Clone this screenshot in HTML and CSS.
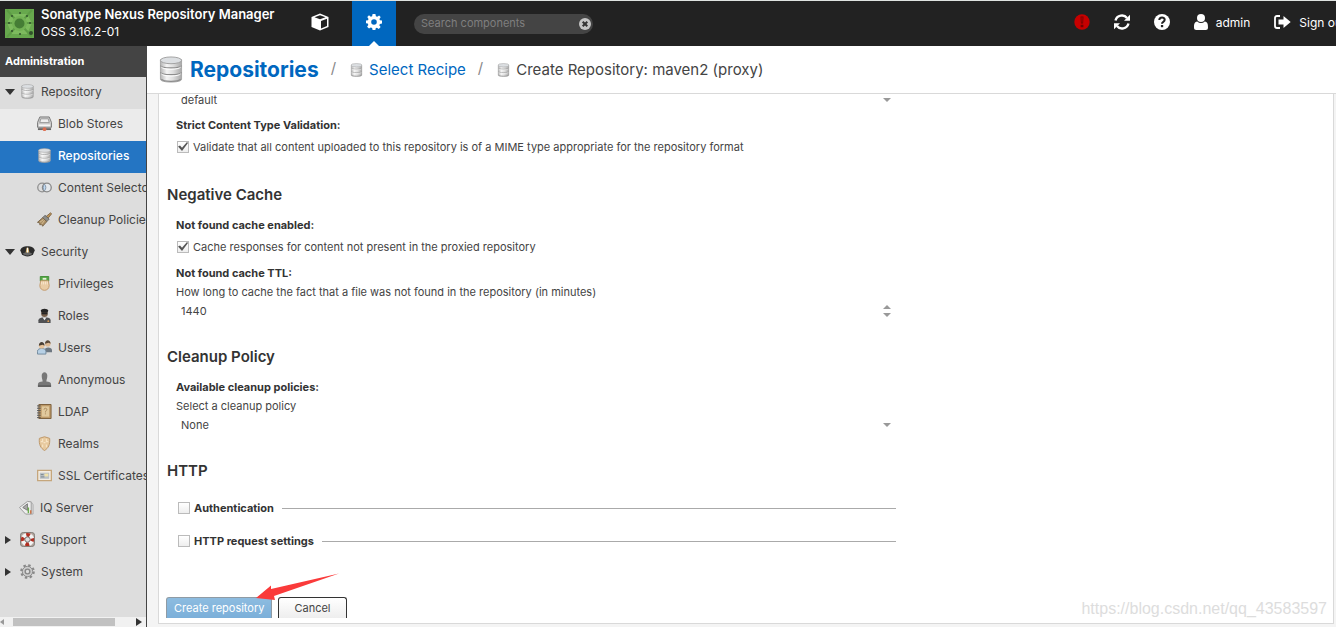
FILE: index.html
```
<!DOCTYPE html>
<html lang="en">
<head>
<meta charset="utf-8">
<title>Sonatype Nexus Repository Manager</title>
<link rel="stylesheet" href="styles.css">
</head>
<body>
<svg class="sprite" aria-hidden="true">
  <defs>
    <linearGradient id="metal" x1="0" x2="1" y1="0" y2="0">
      <stop offset="0" stop-color="#b4b4b4"/><stop offset=".3" stop-color="#f4f4f4"/><stop offset=".6" stop-color="#dedede"/><stop offset="1" stop-color="#a8a8a8"/>
    </linearGradient>
    <symbol id="db" viewBox="0 0 24 28">
      <path d="M1 4v20c0 2 5 3 11 3s11-1 11-3V4z" fill="url(#metal)" stroke="#a5a5a5"/>
      <ellipse cx="12" cy="4.500" rx="11" ry="3.500" fill="#dcdfe2" stroke="#a0a0a0"/>
      <path d="M1 10c1 3 21 3 22 0M1 17c1 3 21 3 22 0M2 24c2 3 18 3 20 0" fill="none" stroke="#8d8d8d" stroke-width="1.200"/>
      <path d="M2 11.500c2 3 18 3 20 0M2 18.500c2 3 18 3 20 0" fill="none" stroke="#fff"/>
    </symbol>
  </defs>
</svg>

<header class="topbar">
  <svg class="logo" viewBox="0 0 29 29" aria-hidden="true">
    <rect width="29" height="29" fill="#67a84d"/>
    <path d="M7 5h15l5 9-5 11H7L2 14z" fill="#7dbb5e"/>
    <path d="M2 1l8 9M27 1l-8 9M2 28l8-9M27 28l-8-9M0 14h8M29 14h-8" stroke="#5d9c45" stroke-width="2"/>
    <circle cx="14.500" cy="14.500" r="7.500" fill="#72b154"/>
    <circle cx="14.500" cy="14.500" r="5" fill="#457d35"/>
    <g fill="#31522b"><circle cx="7" cy="7" r="1"/><circle cx="15" cy="4" r="1"/><circle cx="22" cy="7" r="1"/><circle cx="4" cy="14" r="1"/><circle cx="25" cy="14" r="1"/><circle cx="7" cy="22" r="1"/><circle cx="15" cy="25" r="1"/><circle cx="26" cy="24" r="2"/></g>
  </svg>
  <div class="brand"><strong>Sonatype Nexus Repository Manager</strong><span>OSS 3.16.2-01</span></div>
  <nav class="modes" aria-label="Modes">
    <button class="mode" type="button" aria-label="Browse">
      <svg width="18" height="18" viewBox="0 0 18 18"><path d="M9 .5L17.500 4v10L9 17.500.5 14V4z" fill="#fff"/><path d="M3.500 4.200L9 2.200l5.500 2L9 6.300zM10 8l6-2.300v7.300l-6 2.600z" fill="#222"/></svg>
    </button>
    <button class="mode mode-active" type="button" aria-label="Administration">
      <svg width="16" height="16" viewBox="0 0 16 16"><path fill="#fff" fill-rule="evenodd" d="M6.600 0h2.800l.5 2.200 1.300.5L13.100 1.500l1.500 1.500 0 .3-1.200 1.600.5 1.300 2.100.4v2.800l-2.100.5-.6 1.300 1.300 1.800-1.800 1.900-1.900-1.200-1.200.5L9.400 16H6.600l-.5-2.100-1.300-.5-1.800 1.200-1.900-1.900 1.200-1.800-.5-1.300L0 9.300V6.600l2-.4.5-1.300-1.200-1.900L3 1.300l1.800 1.400 1.300-.5zM8 5.200a2.800 2.800 0 100 5.600 2.800 2.800 0 000-5.600z"/></svg>
    </button>
  </nav>
  <div class="search">
    <input type="text" placeholder="Search components" aria-label="Search components">
    <button type="button" aria-label="Clear search"><svg width="12" height="12" viewBox="0 0 12 12"><circle cx="6" cy="6" r="6" fill="#c4c4c4"/><path d="M3.700 3.700l4.600 4.600M8.300 3.700L3.700 8.300" stroke="#333" stroke-width="2"/></svg></button>
  </div>
  <div class="tools">
    <button type="button" aria-label="System status"><svg width="16" height="16" viewBox="0 0 16 16"><circle cx="8" cy="8" r="7.700" fill="#c70000"/><path d="M6.500 2.500h3l-.4 7H6.900zM6.600 10.700h2.800v2.600H6.600z" fill="#740000"/><path d="M7.500 3.300h1l-.2 5.500h-.6z" fill="#c70000"/></svg></button>
    <button type="button" aria-label="Refresh"><svg width="16" height="16" viewBox="0 0 16 16"><path d="M1.500 6.500C3 1 10 0 13 4M14.500 9.500C13 15 6 16 3 12" fill="none" stroke="#fff" stroke-width="2.400"/><path d="M16 .8v6h-6zM0 15.200v-6h6z" fill="#fff"/></svg></button>
    <button type="button" aria-label="Help"><svg width="16" height="16" viewBox="0 0 16 16"><circle cx="8" cy="8" r="8" fill="#fff"/><path d="M5.300 6c.1-3.300 5.400-3.200 5.400-.2C10.700 8 8 7.700 8 9.800" fill="none" stroke="#222" stroke-width="2"/><path d="M6.900 11h2.300v2.200H6.900z" fill="#222"/></svg></button>
    <button class="user" type="button"><svg width="14" height="16" viewBox="0 0 14 16"><circle cx="7" cy="4" r="4" fill="#fff"/><path d="M3.300 7.400C0 7.700 0 11 0 13.500 0 15.300 1 16 2.200 16h9.600c1.400 0 2.200-.8 2.200-2.500 0-2.500 0-5.800-3.300-6.100a5 5 0 01-7.400 0z" fill="#fff"/></svg>admin</button>
    <button class="signout" type="button"><svg width="17" height="14" viewBox="0 0 17 14"><path d="M6 1H3C1.500 1 1 1.800 1 3v8c0 1.300.6 2 2 2h3" fill="none" stroke="#fff" stroke-width="1.800"/><path d="M4.500 4.500h5V1L16.700 7l-7.200 6V9.500h-5z" fill="#fff"/></svg>Sign out</button>
  </div>
</header>

<div class="app">
  <aside class="sidebar">
    <h2 class="sidebar-title">Administration</h2>
    <nav class="tree" aria-label="Administration">
      <a class="item" href="#"><i class="open"></i><svg viewBox="0 0 24 28"><use href="#db"/></svg>Repository</a>
      <a class="item sub hover" href="#"><svg viewBox="0 0 16 16"><path d="M3 1h10l2.500 6v5H.5V7z" fill="#c9c9c9" stroke="#777"/><path d="M4 3h8l1 4H3z" fill="#eee" stroke="#999"/><path d="M2 9h12v2H2z" fill="#f6f6f6"/><path d="M1 13h14v2H1z" fill="#666"/><circle cx="8" cy="14" r="2" fill="#df6e50"/></svg>Blob Stores</a>
      <a class="item sub selected" href="#"><svg viewBox="0 0 24 28"><use href="#db"/></svg>Repositories</a>
      <a class="item sub" href="#"><svg viewBox="0 0 16 16"><circle cx="5.500" cy="8" r="4.700" fill="#ddd" stroke="#909090" stroke-width="1.400"/><circle cx="10.500" cy="8" r="4.700" fill="#e4e8ec" stroke="#888" stroke-width="1.400"/><path d="M8 4.500a5 5 0 010 7 5 5 0 010-7z" fill="#bdd9f3" stroke="#8292a3"/></svg>Content Selectors</a>
      <a class="item sub" href="#"><svg viewBox="0 0 16 16"><path d="M14.500.8l1 1.200-4 5-2-2z" fill="#bd9558" stroke="#83694a"/><path d="M8.500 3.500l4.500 4-2.500 2.700-4.500-4z" fill="#8c8c88" stroke="#666"/><path d="M6 6.200l4.500 4-4.500 5-1-2-2 .5v-2L.5 11z" fill="#aa8e64" stroke="#776348"/><path d="M3 11l4-3M5 13l3-4" stroke="#d8c19a"/></svg>Cleanup Policies</a>
      <a class="item" href="#"><i class="open"></i><svg viewBox="0 0 16 16"><path d="M.3 7C1 3.600 4 2.500 8 2.500S15 3.600 15.700 7L14 11c-3 3-9 3-12 0z" fill="#2c2c2c"/><path d="M3 10c3-1.500 7-1.500 10 0-2 3-8 3-10 0z" fill="#676767"/><path d="M6 9l1-5h2l1 5z" fill="#d9b878"/><path d="M8 4v5" stroke="#fff"/></svg>Security</a>
      <a class="item sub" href="#"><svg viewBox="0 0 16 16"><path d="M3.500.5h9v5h-9z" fill="#51a742" stroke="#418d36"/><path d="M6 2h4v2H6z" fill="#e9efda"/><path d="M4 5h8l1 5c0 7-10 7-10 0z" fill="#e9cca5" stroke="#c29a6d"/><path d="M5 6v3M7 6v3M9 6v3M11 6v3" stroke="#f8e5cd"/></svg>Privileges</a>
      <a class="item sub" href="#"><svg viewBox="0 0 16 16"><path d="M1.500 16v-3c0-2 3-3 4-3h5c2 0 4 1 4 3v3z" fill="#505153"/><path d="M6 10l2 3 2-3" fill="#eee"/><circle cx="8" cy="6" r="3.500" fill="#77604c"/><path d="M4 3c0-3 8-3 8 0l-1 2H5z" fill="#252525"/><path d="M5 6h6" stroke="#252525" stroke-width="1.500"/><circle cx="12" cy="14" r="1" fill="#db9b50"/></svg>Roles</a>
      <a class="item sub" href="#"><svg viewBox="0 0 16 16"><path d="M8 11c0-4 8-4 8 0v2H8z" fill="#6d7781"/><circle cx="11.500" cy="4" r="3" fill="#ddb994"/><path d="M8.500 4c0-5 6-5 6 0l-2-1z" fill="#5b4a3a"/><path d="M.5 15v-3c0-4 9-4 9 0v3z" fill="#b7d0e5" stroke="#71899d"/><circle cx="5" cy="6" r="3" fill="#e8c39a"/><path d="M2 6c0-5 6-5 6 0L6 5z" fill="#4a3f35"/></svg>Users</a>
      <a class="item sub" href="#"><svg viewBox="0 0 16 16"><path d="M5 4c0-5 6-5 6 0 0 3-1 4-1 6 3 0 5 1 5 3v3H1v-3c0-2 2-3 5-3 0-2-1-3-1-6z" fill="#777"/><path d="M1 14h14v2H1z" fill="#616161"/></svg>Anonymous</a>
      <a class="item sub" href="#"><svg viewBox="0 0 16 16"><path d="M2 .5h13v15H2z" fill="#bd9a69" stroke="#795b37"/><path d="M5 2.500h8v11H5z" fill="#e1c99d"/><path d="M0 2h4M0 4.500h4M0 7h4M0 9.500h4M0 12h4M0 14.500h4" stroke="#555"/><path d="M7.500 6c0-2 3-2 3 0 0 1-1.500 1-1.500 3M9 10v1" fill="none" stroke="#a58459"/></svg>LDAP</a>
      <a class="item sub" href="#"><svg viewBox="0 0 16 16"><path d="M2.500 2.500L8 .8l5.500 1.700c.6 7-1.500 10.500-5.500 13-4-2.500-6.100-6-5.500-13z" fill="#e7c99e" stroke="#bc9566"/><path d="M6 3v3H4M10 3v3h2M6 9v3M10 9v3M7 7h2" fill="none" stroke="#f7e4c5" stroke-width="1.200"/></svg>Realms</a>
      <a class="item sub" href="#"><svg viewBox="0 0 16 16"><path d="M.7 2.500h14.600v11H.7z" fill="#f3ede2" stroke="#c5a67c" stroke-width="1.400"/><path d="M3 5h10v6.500H3z" fill="#b9c0c4"/><path d="M4 9.500h4M4 7h3" stroke="#7c868c"/><path d="M8 6h4v3H8z" fill="#f1e3a8"/></svg>SSL Certificates</a>
      <a class="item leaf" href="#"><svg viewBox="0 0 16 16"><path d="M.5 8L9 1.500l4 .5v13H7z" fill="#eee" stroke="#999"/><path d="M4 8l5-4v7z" fill="#aaa" stroke="#777"/><path d="M10 14V8" stroke="#6bad4a" stroke-width="1.500"/><path d="M12.500 15v-4" stroke="#cf7346" stroke-width="1.500"/><path d="M13 2l2 3v10h-3" fill="none" stroke="#aaa"/></svg>IQ Server</a>
      <a class="item" href="#"><i class="shut"></i><svg viewBox="0 0 16 16"><rect x=".5" y=".5" width="15" height="15" rx="3" fill="#b5aaa2" stroke="#7d7772"/><circle cx="8" cy="8" r="5" fill="none" stroke="#f4f4f4" stroke-width="4"/><circle cx="8" cy="8" r="5" fill="none" stroke="#b02f22" stroke-width="4" stroke-dasharray="3.930 3.930" stroke-dashoffset="1.960"/><circle cx="8" cy="8" r="2.800" fill="#ddd" stroke="#777"/></svg>Support</a>
      <a class="item" href="#"><i class="shut"></i><svg viewBox="0 0 16 16"><circle cx="8" cy="8" r="6.600" fill="none" stroke="#888" stroke-width="2.400" stroke-dasharray="2.600 2.580"/><circle cx="8" cy="8" r="5.500" fill="#ccc" stroke="#888"/><circle cx="8" cy="8" r="2.500" fill="#ddd" stroke="#888" stroke-width="1.500"/></svg>System</a>
    </nav>
    <div class="hscroll"><i class="pale"></i><span></span><i class="shut"></i></div>
  </aside>

  <main class="main">
    <nav class="crumbs" aria-label="Breadcrumb">
      <svg class="crumb-lg" viewBox="0 0 24 28"><use href="#db"/></svg>
      <a class="crumb-home" href="#">Repositories</a>
      <span class="slash">/</span>
      <svg class="crumb-sm" viewBox="0 0 24 28"><use href="#db"/></svg>
      <a href="#">Select Recipe</a>
      <span class="slash">/</span>
      <svg class="crumb-sm" viewBox="0 0 24 28"><use href="#db"/></svg>
      <span>Create Repository: maven2 (proxy)</span>
    </nav>
    <div class="scroller">
      <form class="panel">
        <div class="control first"><select aria-label="Blob store"><option>default</option></select><span class="carets"><i class="down"></i></span></div>
        <div class="field">
          <div class="label">Strict Content Type Validation:</div>
          <label class="check"><input type="checkbox" checked>Validate that all content uploaded to this repository is of a MIME type appropriate for the repository format</label>
        </div>

        <h2>Negative Cache</h2>
        <div class="field">
          <div class="label">Not found cache enabled:</div>
          <label class="check"><input type="checkbox" checked>Cache responses for content not present in the proxied repository</label>
        </div>
        <div class="field next">
          <label class="label" for="ttl">Not found cache TTL:</label>
          <div class="hint">How long to cache the fact that a file was not found in the repository (in minutes)</div>
          <div class="control"><input id="ttl" type="number" value="1440"><span class="carets"><i class="up"></i><i class="down"></i></span></div>
        </div>

        <h2>Cleanup Policy</h2>
        <div class="field">
          <label class="label" for="policy">Available cleanup policies:</label>
          <div class="hint">Select a cleanup policy</div>
          <div class="control"><select id="policy"><option>None</option></select><span class="carets"><i class="down"></i></span></div>
        </div>

        <h2>HTTP</h2>
        <div class="groups">
          <label class="group"><input type="checkbox">Authentication</label>
          <label class="group"><input type="checkbox">HTTP request settings</label>
        </div>

        <div class="actions">
          <button class="btn primary" type="button">Create repository</button>
          <button class="btn" type="button">Cancel</button>
          <svg class="arrow" width="84" height="28" viewBox="0 0 84 28" aria-hidden="true"><path d="M83 .5L15 16V12.500L0 25l19 2-1-4z" fill="#fa3a3a"/></svg>
        </div>
        <div class="watermark">https://blog.csdn.net/qq_43583597</div>
      </form>
    </div>
  </main>
</div>
</body>
</html>
```
FILE: styles.css
```
* { box-sizing: border-box; }
body {
  margin: 0;
  min-height: 100vh;
  display: flex;
  flex-direction: column;
  font: 11px/19px Inter, "Liberation Sans", sans-serif;
  color: #444;
  background: #f4f4f4;
  overflow: hidden;
}
button, input, select { font: inherit; color: inherit; }
button { border: 0; background: none; padding: 0; }
a { color: #0067bf; text-decoration: none; }
svg { flex: none; }
.sprite { position: absolute; width: 0; height: 0; }

.topbar {
  display: flex;
  align-items: center;
  height: 46px;
  padding-left: 5px;
  background: #222;
  border-top: 1px solid #dfe3e1;
  color: #fff;
  overflow: hidden;
  white-space: nowrap;
}
.logo { width: 29px; height: 29px; }
.brand { display: flex; flex-direction: column; width: 257px; margin-left: 7px; padding-bottom: 1px; line-height: 18px; font-size: 12px; }
.brand strong { font-size: 13px; font-weight: 600; }
.modes { display: flex; align-self: stretch; }
.mode { display: grid; place-items: center; width: 44px; margin-right: 10px; padding-bottom: 3px; position: relative; }
.mode-active { background: #0067bf; margin-right: 0; }
.mode-active::after {
  content: "";
  position: absolute;
  bottom: 0;
  left: 17px;
  border: 5px solid transparent;
  border-top: 0;
  border-bottom-color: #fff;
}
.search {
  display: flex;
  align-items: center;
  width: 179px;
  height: 20px;
  margin-left: 18px;
  padding: 0 2px 0 7px;
  border-radius: 10px;
  background: #444;
}
.search input { flex: 1; min-width: 0; padding: 0; border: 0; background: none; color: #fff; outline: 0; }
.search input::placeholder { color: #7f7f7f; }
.search svg { display: block; }
.tools { display: flex; align-items: center; gap: 24px; margin-left: auto; margin-right: -10px; padding-bottom: 3px; font-size: 12px; }
.tools button { display: flex; align-items: center; gap: 8px; }

.app { display: flex; flex: 1; min-height: 0; }
.sidebar { display: flex; flex-direction: column; width: 147px; background: #ddd; border-right: 1px solid #444; overflow: hidden; }
.sidebar-title { margin: 0; padding: 0 5px; font-size: 11px; line-height: 31px; color: #fff; background: #444; }
.tree { flex: 1; font-size: 12px; }
.item { display: flex; align-items: center; height: 32px; padding: 0 0 3px 5px; color: #444; white-space: nowrap; }
.item svg { width: 15px; height: 15px; margin-right: 6px; }
.item i { margin-right: 5px; }
.item.sub { padding-left: 37px; }
.item.leaf { padding-left: 19px; }
.item.hover { background: #ebebeb; }
.item.selected { background: #2475c3; color: #fff; font-weight: 500; }
i { display: block; flex: none; border: 4px solid transparent; }
.open { border: 5px solid transparent; border-top: 6px solid #333; border-bottom: 0; }
.shut { border: 4px solid transparent; border-left: 6px solid #333; border-right: 0; }
.item .shut { margin-right: 9px; }
.hscroll { display: flex; align-items: center; height: 10px; background: #f1f1f1; }
.hscroll span { width: 102px; height: 8px; margin: 0 21px 0 9px; background: #c1c1c1; }
.hscroll .pale { border: 3px solid transparent; border-right: 4px solid #999; border-left: 0; }

.main { display: flex; flex-direction: column; flex: 1; min-width: 0; }
.crumbs {
  display: flex;
  align-items: center;
  height: 48px;
  padding-left: 12px;
  background: #fff;
  border-bottom: 1px solid #d9d9d9;
  font-size: 15px;
  white-space: nowrap;
}
.crumb-home { margin-left: 7px; font-size: 21px; font-weight: 700; }
.crumb-lg { width: 24px; height: 27px; }
.crumb-sm { width: 13px; height: 14px; margin-right: 6px; }
.slash { margin: 0 14px 4px 12px; color: #888; }
.scroller { flex: 1; padding: 0 2px 3px 11px; overflow: hidden; }
.panel {
  padding: 0 7px 5px;
  background: #fff;
  border: 1px solid #d9d9d9;
  border-top: 0;
  position: relative;
}
.panel h2 { margin: 24px 0 8px 1px; font-size: 15px; line-height: 24px; font-weight: 600; color: #333; }
.field, .groups { margin-left: 10px; max-width: 720px; }
.field.next { margin-top: 4px; }
.label { display: block; font-weight: 700; line-height: 20px; color: #333; }
.control { display: flex; align-items: center; position: relative; }
.control.first { margin: -3px 0 4px 10px; padding-bottom: 1px; max-width: 720px; }
.control select, .control input {
  appearance: none;
  width: 100%;
  height: 19px;
  padding: 0 5px;
  border: 0;
  background: none;
  outline: 0;
}
.control input::-webkit-inner-spin-button { appearance: none; }
.carets { display: grid; gap: 4px; position: absolute; right: 5px; padding-bottom: 2px; pointer-events: none; }
.up { border-top: 0; border-bottom-color: #999; }
.down { border-bottom: 0; border-top-color: #999; }
.check { display: flex; align-items: center; height: 24px; gap: 4px; }
input[type=checkbox] {
  appearance: none;
  flex: none;
  width: 12px;
  height: 12px;
  margin: 0;
  border: 1px solid #bbb;
  background: linear-gradient(#fff, #eee);
}
.check input { margin-left: 1px; }
input[type=checkbox]:checked::after {
  content: "";
  display: block;
  width: 10px;
  height: 9px;
  background: #555;
  clip-path: polygon(0 50%, 20% 40%, 40% 65%, 90% 0, 100% 10%, 40% 100%);
}
.groups { display: grid; gap: 9px; padding-top: 5px; }
.group { display: flex; align-items: center; height: 24px; gap: 4px; padding-left: 2px; font-weight: 700; color: #333; }
.group::after { content: ""; flex: 1; height: 1px; margin-left: 4px; background: #aaa; }
.actions { display: flex; gap: 6px; margin-top: 44px; position: relative; }
.btn {
  height: 21px;
  padding: 0 15px;
  border: 1px solid #333;
  border-bottom: 0;
  border-radius: 3px 3px 0 0;
  background: linear-gradient(#fff, #eee);
}
.btn.primary { padding: 0 7px; color: #fff; border-color: #8f9ba4; background: linear-gradient(#8dbce0, #7bafd9); }
.arrow { position: absolute; left: 90px; top: -24px; }
.watermark {
  position: absolute;
  right: 6px;
  bottom: 4px;
  font: 16px/20px "Liberation Sans", Arial, sans-serif;
  color: #ddd;
}
```
